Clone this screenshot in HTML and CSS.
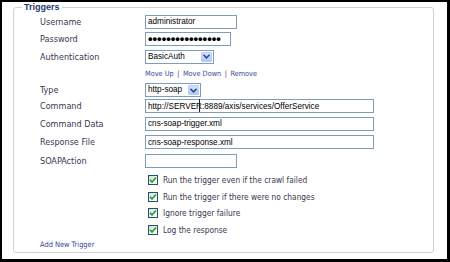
FILE: index.html
```html
<!DOCTYPE html>
<html>
<head>
<meta charset="utf-8">
<link rel="stylesheet" href="styles.css">
</head>
<body>
<div class="frame">
  <fieldset class="box">
    <legend class="legend">Triggers</legend>
    <div class="rows">
      <div class="lbl">Username</div>
      <div class="ctl"><input class="field w-user" type="text" value="administrator"></div>

      <div class="lbl">Password</div>
      <div class="ctl"><div class="field pass w-pass">••••••••••••••••</div></div>

      <div class="lbl">Authentication</div>
      <div class="ctl">
        <div class="select w-auth"><span class="sel-text">BasicAuth</span><span class="sel-btn"><svg width="7" height="5" viewBox="0 0 7 5"><path d="M0.5 0.8 L3.5 3.8 L6.5 0.8" fill="none" stroke="#2a4ea0" stroke-width="1.6"/></svg></span></div>
      </div>

      <div class="ctl links"><a class="lnk">Move Up</a><span class="sep">|</span><a class="lnk">Move Down</a><span class="sep">|</span><a class="lnk">Remove</a></div>

      <div class="lbl">Type</div>
      <div class="ctl">
        <div class="select w-type"><span class="sel-text">http-soap</span><span class="sel-btn"><svg width="7" height="5" viewBox="0 0 7 5"><path d="M0.5 0.8 L3.5 3.8 L6.5 0.8" fill="none" stroke="#2a4ea0" stroke-width="1.6"/></svg></span></div>
      </div>

      <div class="lbl">Command</div>
      <div class="ctl caret-wrap"><input class="field w-long" type="text" value="http://SERVER:8889/axis/services/OfferService"><span class="caret"></span></div>

      <div class="lbl">Command Data</div>
      <div class="ctl"><input class="field w-long" type="text" value="cns-soap-trigger.xml"></div>

      <div class="lbl">Response File</div>
      <div class="ctl"><input class="field w-long" type="text" value="cns-soap-response.xml"></div>

      <div class="lbl">SOAPAction</div>
      <div class="ctl"><input class="field w-user" type="text" value=""></div>

      <div class="ctl chk"><span class="cb"><svg width="8" height="8" viewBox="0 0 8 8"><path d="M1 3.8 L3 6 L7 1.5" fill="none" stroke="#21a121" stroke-width="1.6"/></svg></span><span class="chk-text">Run the trigger even if the crawl failed</span></div>
      <div class="ctl chk"><span class="cb"><svg width="8" height="8" viewBox="0 0 8 8"><path d="M1 3.8 L3 6 L7 1.5" fill="none" stroke="#21a121" stroke-width="1.6"/></svg></span><span class="chk-text">Run the trigger if there were no changes</span></div>
      <div class="ctl chk"><span class="cb"><svg width="8" height="8" viewBox="0 0 8 8"><path d="M1 3.8 L3 6 L7 1.5" fill="none" stroke="#21a121" stroke-width="1.6"/></svg></span><span class="chk-text">Ignore trigger failure</span></div>
      <div class="ctl chk"><span class="cb"><svg width="8" height="8" viewBox="0 0 8 8"><path d="M1 3.8 L3 6 L7 1.5" fill="none" stroke="#21a121" stroke-width="1.6"/></svg></span><span class="chk-text">Log the response</span></div>

      <div class="add"><a class="lnk">Add New Trigger</a></div>
    </div>
  </fieldset>
</div>
</body>
</html>
```
FILE: styles.css
```css
html, body {
  margin: 0;
  padding: 0;
  background: #fff;
}
.frame {
  width: 450px;
  height: 262px;
  box-sizing: border-box;
  border-style: solid;
  border-color: #000;
  border-width: 2px 3px 3px 2px;
  background: #fff;
  padding-left: 11px;
  font-family: "DejaVu Sans Condensed", "Liberation Sans", sans-serif;
}
.box {
  margin: 0;
  width: 421px;
  height: 251px;
  box-sizing: border-box;
  border: 1px solid #d2d2d2;
  border-radius: 3px;
  padding: 0 0 0 26px;
  min-width: 0;
}
.legend {
  margin-left: -18px;
  padding: 0 2px;
  font-family: "Liberation Sans", sans-serif;
  font-weight: bold;
  font-size: 9px;
  line-height: 10px;
  color: #1d3a6e;
}
.rows {
  margin-top: 1px;
  display: grid;
  grid-template-columns: 105px 1fr;
  grid-template-rows: 17px 18px 17px 17px 16px 16px 19px 18px 20px 17px 17px 16px 17px 14px;
  align-items: center;
}
.lbl {
  grid-column: 1;
  font-size: 9px;
  color: #3b3650;
  line-height: 12px;
}
.ctl {
  grid-column: 2;
  display: flex;
  align-items: center;
}
.field {
  box-sizing: border-box;
  height: 14px;
  margin: 0;
  border: 1px solid #7f9db9;
  padding: 0 2px;
  font-family: "Liberation Sans", sans-serif;
  font-size: 8.2px;
  color: #000;
  background: #fff;
  outline: none;
}
.pass {
  font-family: "Liberation Sans", sans-serif;
  font-weight: bold;
  font-size: 13px;
  line-height: 12px;
  letter-spacing: 0;
  padding-left: 2px;
  white-space: nowrap;
}
.w-user { width: 92px; }
.w-pass { width: 86px; }
.w-long { width: 229px; }
.w-auth { width: 69px; }
.w-type { width: 56px; }
.select {
  box-sizing: border-box;
  height: 14px;
  border: 1px solid #7f9db9;
  display: flex;
  align-items: stretch;
  background: #fff;
}
.sel-text {
  flex: 1;
  padding-left: 2px;
  font-family: "Liberation Sans", sans-serif;
  font-size: 8.2px;
  line-height: 12px;
  color: #000;
}
.sel-btn {
  width: 11px;
  margin: 1px;
  box-sizing: border-box;
  background: linear-gradient(#d6e2fc, #b4c8f4);
  border: 1px solid #b9cbf1;
  border-radius: 1px;
  display: flex;
  align-items: center;
  justify-content: center;
}
.links {
  font-size: 7.3px;
  line-height: 10px;
}
.lnk {
  color: #33489a;
  text-decoration: none;
}
.sep {
  color: #4a3b78;
  margin: 0 3.5px;
}
.caret-wrap {
  position: relative;
}
.caret {
  position: absolute;
  left: 54px;
  top: 0;
  width: 1px;
  height: 13px;
  background: #222;
}
.chk {
  padding-left: 3px;
}
.cb {
  box-sizing: border-box;
  width: 10px;
  height: 10px;
  border: 1px solid #1c5180;
  background: linear-gradient(135deg, #dcdcd7, #fff);
  display: flex;
  align-items: center;
  justify-content: center;
  margin-right: 5px;
}
.chk-text {
  font-size: 8.3px;
  line-height: 10px;
  color: #3b3650;
}
.add {
  grid-column: 1 / 3;
  font-size: 7.4px;
  line-height: 10px;
}
```
